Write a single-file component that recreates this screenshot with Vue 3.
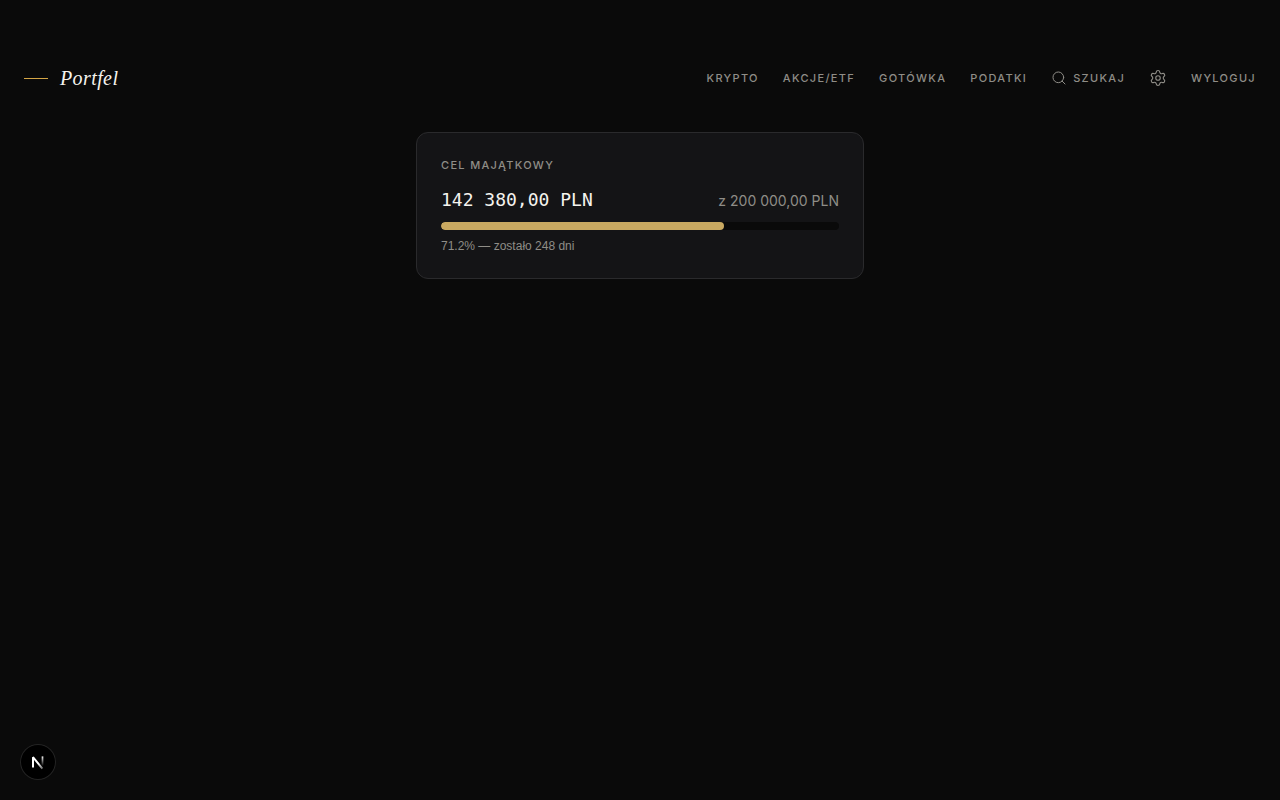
<script setup>
const links = ['Krypto', 'Akcje/ETF', 'Gotówka', 'Podatki']
const goal = { current: '142 380,00 PLN', target: '200 000,00 PLN', percent: 71.2, days: 248 }
</script>

<template>
  <div class="page">
    <header class="header">
      <a href="#" class="brand"><span class="rule"></span><span>Portfel</span></a>
      <nav class="nav">
        <a v-for="link in links" :key="link" href="#" class="item">{{ link }}</a>
        <button type="button" class="item search">
          <svg width="16" height="16" viewBox="0 0 24 24" fill="none" stroke="currentColor" stroke-width="1.5" stroke-linecap="round" stroke-linejoin="round" aria-hidden="true">
            <circle cx="11" cy="11" r="8" />
            <path d="m21 21-4.34-4.34" />
          </svg>
          <span>Szukaj</span>
        </button>
        <a href="#" class="item settings" aria-label="Ustawienia">
          <svg width="18" height="18" viewBox="0 0 24 24" fill="none" stroke="currentColor" stroke-width="1.5" stroke-linecap="round" stroke-linejoin="round" aria-hidden="true">
            <path d="M9.671 4.136a2.34 2.34 0 0 1 4.659 0 2.34 2.34 0 0 0 3.319 1.915 2.34 2.34 0 0 1 2.33 4.033 2.34 2.34 0 0 0 0 3.831 2.34 2.34 0 0 1-2.33 4.033 2.34 2.34 0 0 0-3.319 1.915 2.34 2.34 0 0 1-4.659 0 2.34 2.34 0 0 0-3.32-1.915 2.34 2.34 0 0 1-2.33-4.033 2.34 2.34 0 0 0 0-3.831A2.34 2.34 0 0 1 6.35 6.051a2.34 2.34 0 0 0 3.319-1.915" />
            <circle cx="12" cy="12" r="3" />
          </svg>
        </a>
        <button type="button" class="item logout">Wyloguj</button>
      </nav>
    </header>

    <main class="main">
      <section class="card">
        <h2 class="label">Cel majątkowy</h2>
        <div class="amounts">
          <span class="current">{{ goal.current }}</span>
          <span class="target">z {{ goal.target }}</span>
        </div>
        <div class="track" role="progressbar" aria-label="Cel majątkowy" :aria-valuenow="goal.percent" aria-valuemin="0" aria-valuemax="100">
          <div class="fill" :style="{ width: goal.percent + '%' }"></div>
        </div>
        <p class="note">{{ goal.percent }}% — zostało {{ goal.days }} dni</p>
      </section>
    </main>

    <button type="button" class="badge" aria-label="Narzędzia">
      <svg width="36" height="36" viewBox="0 0 36 36" fill="none" aria-hidden="true">
        <defs>
          <linearGradient id="diag" x1="19" y1="19" x2="24" y2="25" gradientUnits="userSpaceOnUse">
            <stop stop-color="#fff" />
            <stop offset="1" stop-color="#fff" stop-opacity="0.3" />
          </linearGradient>
          <linearGradient id="stem" x1="0" y1="12" x2="0" y2="22" gradientUnits="userSpaceOnUse">
            <stop stop-color="#fff" />
            <stop offset="1" stop-color="#fff" stop-opacity="0" />
          </linearGradient>
        </defs>
        <path d="M13 23.6V13.2L22.4 24.6" stroke="url(#diag)" stroke-width="2" stroke-linejoin="bevel" />
        <path d="M22.5 12.4v9.6" stroke="url(#stem)" stroke-width="1.7" />
      </svg>
    </button>
  </div>
</template>

<style>
body {
  background: #0a0a0a;
}
</style>

<style scoped>
.page {
  min-height: 100vh;
  box-sizing: border-box;
  padding: 48px 24px;
  color: #8f8d87;
  font-family: Inter, "Liberation Sans", sans-serif;
}
.header {
  display: flex;
  align-items: center;
  justify-content: space-between;
  height: 60px;
}
.brand {
  display: flex;
  align-items: center;
  gap: 12px;
  color: #f5f3ee;
  font: italic 20px/28px "Liberation Serif", serif;
  letter-spacing: 0.02em;
  text-decoration: none;
}
.rule {
  width: 24px;
  height: 1px;
  background: #d4a545;
}
.nav {
  display: flex;
  align-items: center;
  gap: 24px;
}
.item {
  display: flex;
  align-items: center;
  gap: 6px;
  padding: 0;
  border: 0;
  background: none;
  color: inherit;
  font: 500 11px/16px Inter, "Liberation Sans", sans-serif;
  letter-spacing: 0.12em;
  text-transform: uppercase;
  text-decoration: none;
  cursor: pointer;
}
.main {
  display: flex;
  justify-content: center;
  padding-top: 24px;
}
.card {
  box-sizing: border-box;
  width: 100%;
  max-width: 448px;
  padding: 24px;
  border: 1px solid #2a2a2c;
  border-radius: 12px;
  background: #141416;
}
.label {
  margin: 0 0 12px;
  font-size: 11px;
  line-height: 17px;
  font-weight: 500;
  letter-spacing: 0.12em;
  text-transform: uppercase;
}
.amounts {
  display: flex;
  align-items: baseline;
  justify-content: space-between;
  margin-bottom: 8px;
}
.current {
  color: #f5f3ee;
  font: 18px/28px "DejaVu Sans Mono", monospace;
}
.target {
  font-size: 14px;
  line-height: 20px;
}
.track {
  height: 8px;
  border-radius: 4px;
  background: #0a0a0a;
  overflow: hidden;
}
.fill {
  height: 100%;
  border-radius: 4px;
  background: #c9a961;
}
.note {
  margin: 8px 0 0;
  font: 12px/16px "Liberation Sans", sans-serif;
}
.badge {
  position: fixed;
  left: 20px;
  bottom: 20px;
  width: 36px;
  height: 36px;
  padding: 0;
  border: 0;
  border-radius: 50%;
  background: #000;
  box-shadow: inset 0 0 0 1px #242424;
  cursor: pointer;
}
.badge svg {
  display: block;
}
</style>
